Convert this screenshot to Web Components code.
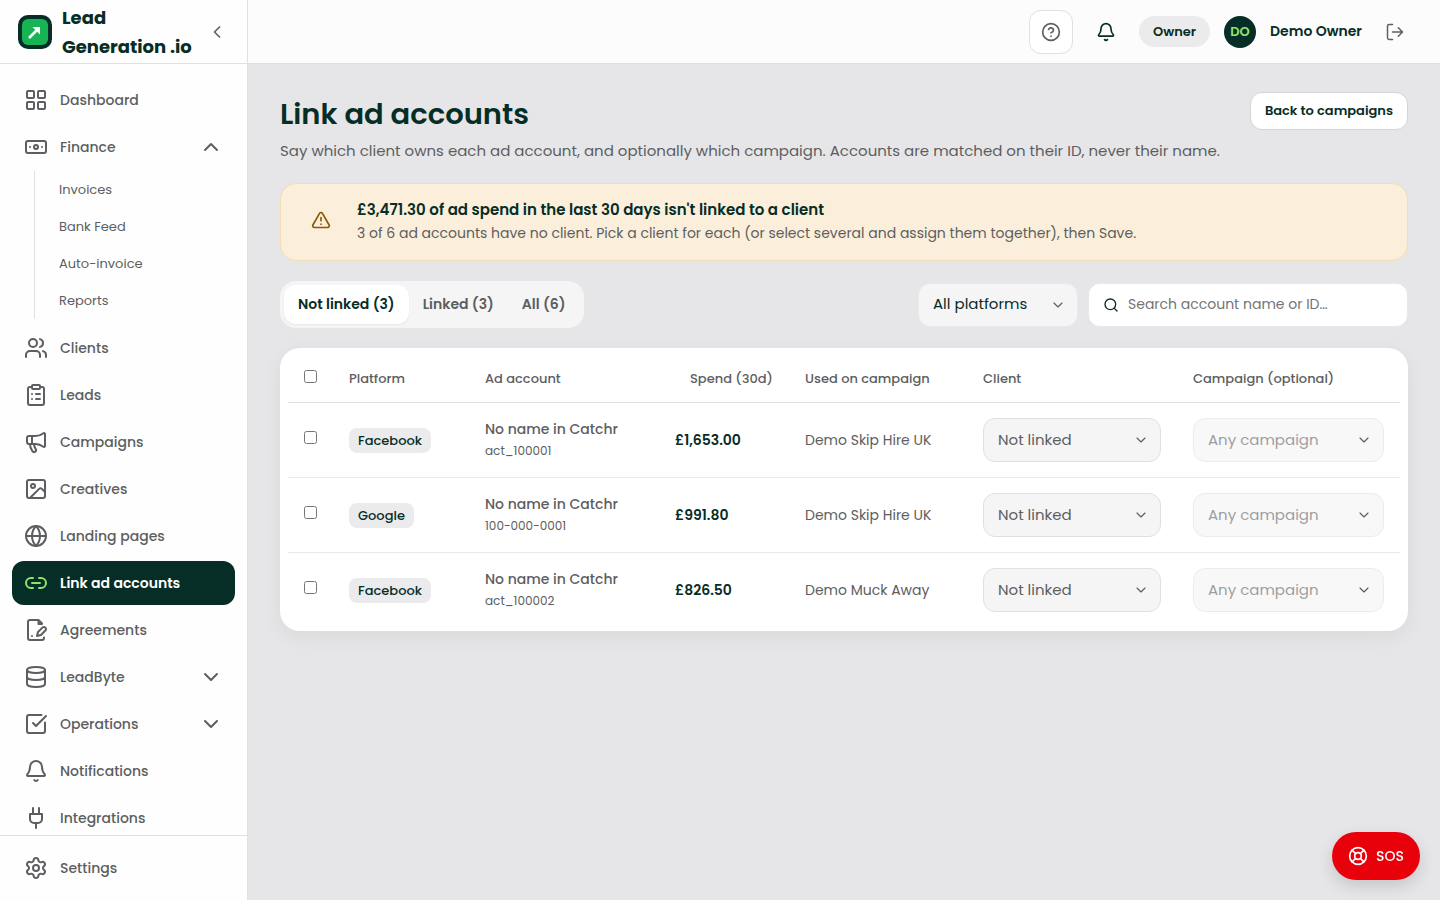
<!DOCTYPE html>
<html lang="en">
<head>
<meta charset="utf-8">
<meta name="viewport" content="width=device-width, initial-scale=1">
<title>Link ad accounts - Lead Generation .io</title>
<style>
    :root {
        --ink: #062d26;
        --muted: #5c5e61;
        --page: #e6e6e8;
        --line: #e0e0e2;
        --soft: #f5f5f6;
        --chip: #ebebed;
        --lime: #8fe36a;
        --sos: #e8000b;
    }

    body {
        margin: 0;
        background: var(--page);
        color: var(--ink);
        font-family: Poppins, Inter, "Liberation Sans", sans-serif;
        font-size: 15px;
    }
</style>
</head>
<body>

<app-shell>
    <app-sidebar slot="sidebar">
        <nav-item icon="grid">Dashboard</nav-item>
        <nav-group icon="banknote" label="Finance" open>
            <a href="#invoices">Invoices</a>
            <a href="#bank-feed">Bank Feed</a>
            <a href="#auto-invoice">Auto-invoice</a>
            <a href="#reports">Reports</a>
        </nav-group>
        <nav-item icon="users">Clients</nav-item>
        <nav-item icon="clipboard">Leads</nav-item>
        <nav-item icon="megaphone">Campaigns</nav-item>
        <nav-item icon="image">Creatives</nav-item>
        <nav-item icon="globe">Landing pages</nav-item>
        <nav-item icon="link" active>Link ad accounts</nav-item>
        <nav-item icon="signature">Agreements</nav-item>
        <nav-group icon="database" label="LeadByte"></nav-group>
        <nav-group icon="check-square" label="Operations"></nav-group>
        <nav-item icon="bell">Notifications</nav-item>
        <nav-item icon="plug">Integrations</nav-item>
        <nav-item slot="footer" icon="settings">Settings</nav-item>
    </app-sidebar>

    <app-topbar slot="topbar" role-name="Owner" initials="DO">Demo Owner</app-topbar>

    <page-heading>
        <span slot="title">Link ad accounts</span>
        <app-button slot="action">Back to campaigns</app-button>
        Say which client owns each ad account, and optionally which campaign. Accounts are matched on their ID, never their name.
    </page-heading>

    <page-alert>
        <span slot="title">£3,471.30 of ad spend in the last 30 days isn't linked to a client</span>
        3 of 6 ad accounts have no client. Pick a client for each (or select several and assign them together), then Save.
    </page-alert>

    <filter-bar></filter-bar>
    <accounts-table></accounts-table>
    <sos-button>SOS</sos-button>
</app-shell>

<script>
const ICONS = {
    'grid': '<rect x="3" y="3" width="7" height="7" rx="1"/><rect x="14" y="3" width="7" height="7" rx="1"/><rect x="14" y="14" width="7" height="7" rx="1"/><rect x="3" y="14" width="7" height="7" rx="1"/>',
    'banknote': '<rect x="2" y="6" width="20" height="12" rx="2"/><circle cx="12" cy="12" r="2"/><path d="M6 12h.01M18 12h.01"/>',
    'users': '<path d="M16 21v-2a4 4 0 0 0-4-4H6a4 4 0 0 0-4 4v2"/><circle cx="9" cy="7" r="4"/><path d="M22 21v-2a4 4 0 0 0-3-3.87M16 3.13a4 4 0 0 1 0 7.75"/>',
    'clipboard': '<rect x="8" y="2" width="8" height="4" rx="1"/><path d="M16 4h2a2 2 0 0 1 2 2v14a2 2 0 0 1-2 2H6a2 2 0 0 1-2-2V6a2 2 0 0 1 2-2h2M12 11h4M12 16h4M8 11h.01M8 16h.01"/>',
    'megaphone': '<path d="M11 6a13 13 0 0 0 8.4-2.8A1 1 0 0 1 21 4v12a1 1 0 0 1-1.6.8A13 13 0 0 0 11 14H5a2 2 0 0 1-2-2V8a2 2 0 0 1 2-2z"/><path d="M6 14a12 12 0 0 0 2.4 7.2 2 2 0 0 0 3.2-2.4A8 8 0 0 1 10 14M8 6v8"/>',
    'image': '<rect x="3" y="3" width="18" height="18" rx="2"/><circle cx="9" cy="9" r="2"/><path d="m21 15-3.086-3.086a2 2 0 0 0-2.828 0L6 21"/>',
    'globe': '<circle cx="12" cy="12" r="10"/><path d="M12 2a14.5 14.5 0 0 0 0 20 14.5 14.5 0 0 0 0-20M2 12h20"/>',
    'link': '<path d="M9 17H7A5 5 0 0 1 7 7h2M15 7h2a5 5 0 1 1 0 10h-2M8 12h8"/>',
    'signature': '<path d="M20 19.5v.5a2 2 0 0 1-2 2H6a2 2 0 0 1-2-2V4a2 2 0 0 1 2-2h8.5L18 5.5M14.5 2v4H18M8 18h.01"/><path d="M18.42 9.61a2.1 2.1 0 1 1 2.97 2.97L16.95 17 13 18l.99-3.95 4.43-4.44Z"/>',
    'database': '<ellipse cx="12" cy="5" rx="9" ry="3"/><path d="M3 5v14a9 3 0 0 0 18 0V5M3 12a9 3 0 0 0 18 0"/>',
    'check-square': '<path d="M21 10.5V19a2 2 0 0 1-2 2H5a2 2 0 0 1-2-2V5a2 2 0 0 1 2-2h12.5"/><path d="m9 11 3 3L22 4"/>',
    'bell': '<path d="M10.268 21a2 2 0 0 0 3.464 0"/><path d="M3.262 15.326A1 1 0 0 0 4 17h16a1 1 0 0 0 .74-1.673C19.41 13.956 18 12.499 18 8A6 6 0 0 0 6 8c0 4.499-1.411 5.956-2.738 7.326"/>',
    'plug': '<path d="M12 22v-5M9 8V2M15 8V2M18 8v5a4 4 0 0 1-4 4h-4a4 4 0 0 1-4-4V8Z"/>',
    'settings': '<path d="M9.671 4.136a2.34 2.34 0 0 1 4.659 0 2.34 2.34 0 0 0 3.319 1.915 2.34 2.34 0 0 1 2.33 4.033 2.34 2.34 0 0 0 0 3.831 2.34 2.34 0 0 1-2.33 4.033 2.34 2.34 0 0 0-3.319 1.915 2.34 2.34 0 0 1-4.659 0 2.34 2.34 0 0 0-3.32-1.915 2.34 2.34 0 0 1-2.33-4.033 2.34 2.34 0 0 0 0-3.831A2.34 2.34 0 0 1 6.35 6.051a2.34 2.34 0 0 0 3.319-1.915"/><circle cx="12" cy="12" r="3"/>',
    'help': '<circle cx="12" cy="12" r="10"/><path d="M9.09 9a3 3 0 0 1 5.83 1c0 2-3 3-3 3M12 17h.01"/>',
    'logout': '<path d="m16 17 5-5-5-5M21 12H9M9 21H5a2 2 0 0 1-2-2V5a2 2 0 0 1 2-2h4"/>',
    'alert': '<path d="m21.73 18-8-14a2 2 0 0 0-3.48 0l-8 14A2 2 0 0 0 4 21h16a2 2 0 0 0 1.73-3M12 9v4M12 17h.01"/>',
    'search': '<circle cx="11" cy="11" r="8"/><path d="m21 21-4.34-4.34"/>',
    'lifebuoy': '<circle cx="12" cy="12" r="10"/><circle cx="12" cy="12" r="4"/><path d="m4.93 4.93 4.24 4.24M14.83 9.17l4.24-4.24M14.83 14.83l4.24 4.24M9.17 14.83l-4.24 4.24"/>',
    'chevron-down': '<path d="m6 9 6 6 6-6"/>',
    'chevron-up': '<path d="m18 15-6-6-6 6"/>',
    'chevron-left': '<path d="m15 18-6-6 6-6"/>'
};

class AppIcon extends HTMLElement {
    connectedCallback() {
        const size = this.getAttribute('size') || 24;
        const weight = this.getAttribute('weight') || 2;
        const root = this.shadowRoot || this.attachShadow({ mode: 'open' });
        root.innerHTML = `
            <style>
                :host { display: block; flex: none; width: ${size}px; height: ${size}px; }
                svg { display: block; }
            </style>
            <svg width="${size}" height="${size}" viewBox="0 0 24 24" fill="none" stroke="currentColor"
                stroke-width="${weight}" stroke-linecap="round" stroke-linejoin="round" aria-hidden="true">
                ${ICONS[this.getAttribute('name')]}
            </svg>
        `;
    }
}

class AppShell extends HTMLElement {
    constructor() {
        super();
        this.attachShadow({ mode: 'open' });
        this.shadowRoot.innerHTML = `
            <style>
                :host { display: grid; grid-template-columns: 248px minmax(0, 1fr); min-height: 100vh; }
                main { display: flex; flex-direction: column; padding: 28px 32px; }
            </style>
            <slot name="sidebar"></slot>
            <div>
                <slot name="topbar"></slot>
                <main><slot></slot></main>
            </div>
        `;
    }
}

class AppSidebar extends HTMLElement {
    constructor() {
        super();
        this.attachShadow({ mode: 'open' });
        this.shadowRoot.innerHTML = `
            <style>
                :host {
                    display: flex;
                    flex-direction: column;
                    position: sticky;
                    top: 0;
                    height: 100vh;
                    box-sizing: border-box;
                    background: #fefefe;
                    border-right: 1px solid var(--line);
                }
                header {
                    display: flex;
                    align-items: center;
                    gap: 10px;
                    height: 63px;
                    padding: 0 18px;
                    border-bottom: 1px solid var(--line);
                }
                .logo { flex: none; display: block; }
                .brand {
                    flex: 1;
                    min-width: 0;
                    font-size: 18px;
                    line-height: 29px;
                    font-weight: 700;
                    white-space: nowrap;
                }
                button {
                    display: grid;
                    place-items: center;
                    width: 24px;
                    height: 24px;
                    padding: 0;
                    border: 0;
                    background: none;
                    color: var(--muted);
                }
                nav {
                    flex: 1;
                    min-height: 0;
                    overflow: hidden;
                    display: flex;
                    flex-direction: column;
                    gap: 3px;
                    padding: 14px 12px 0;
                }
                footer { padding: 10px 12px; border-top: 1px solid var(--line); }
            </style>
            <header>
                <svg class="logo" width="34" height="34" viewBox="0 0 34 34" aria-hidden="true">
                    <rect width="34" height="34" rx="10" fill="#062d26"/>
                    <rect x="4" y="4" width="26" height="26" rx="6" fill="#16b455"/>
                    <path d="M11 23 20 14" fill="none" stroke="#fff" stroke-width="2.6"/>
                    <path d="M14.5 12H22v7.5Z" fill="#fff"/>
                </svg>
                <div class="brand">Lead<br>Generation .io</div>
                <button aria-label="Collapse sidebar"><app-icon name="chevron-left" size="20"></app-icon></button>
            </header>
            <nav><slot></slot></nav>
            <footer><slot name="footer"></slot></footer>
        `;
    }
}

class NavItem extends HTMLElement {
    constructor() {
        super();
        this.attachShadow({ mode: 'open' });
        this.shadowRoot.innerHTML = `
            <style>
                :host { display: block; flex: none; }
                a {
                    display: flex;
                    align-items: center;
                    gap: 12px;
                    height: 44px;
                    padding: 0 12px;
                    border-radius: 12px;
                    color: var(--muted);
                    font-size: 14px;
                    font-weight: 500;
                    text-decoration: none;
                }
                :host([active]) a { background: var(--ink); color: #fff; font-weight: 600; }
                :host([active]) app-icon { color: var(--lime); }
            </style>
            <a href="#"><app-icon name="${this.getAttribute('icon')}"></app-icon><slot></slot></a>
        `;
    }
}

class NavGroup extends HTMLElement {
    constructor() {
        super();
        const open = this.hasAttribute('open');
        this.attachShadow({ mode: 'open' });
        this.shadowRoot.innerHTML = `
            <style>
                :host { display: block; flex: none; }
                button {
                    display: flex;
                    align-items: center;
                    gap: 12px;
                    width: 100%;
                    height: 44px;
                    padding: 0 12px;
                    border: 0;
                    background: none;
                    color: var(--muted);
                    font: inherit;
                    font-size: 14px;
                    font-weight: 500;
                    text-align: left;
                }
                span { flex: 1; }
                .sub {
                    display: flex;
                    flex-direction: column;
                    margin: 2px 0 4px 22px;
                    border-left: 1px solid var(--line);
                }
                .sub[hidden] { display: none; }
                ::slotted(a) {
                    padding-left: 24px;
                    color: var(--muted);
                    font-size: 13px;
                    line-height: 37px;
                    text-decoration: none;
                }
            </style>
            <button aria-expanded="${open}">
                <app-icon name="${this.getAttribute('icon')}"></app-icon>
                <span>${this.getAttribute('label')}</span>
                <app-icon name="chevron-${open ? 'up' : 'down'}"></app-icon>
            </button>
            <div class="sub" ${open ? '' : 'hidden'}><slot></slot></div>
        `;
    }
}

class AppTopbar extends HTMLElement {
    constructor() {
        super();
        this.attachShadow({ mode: 'open' });
        this.shadowRoot.innerHTML = `
            <style>
                :host {
                    display: flex;
                    align-items: center;
                    justify-content: flex-end;
                    gap: 14px;
                    height: 63px;
                    padding: 0 26px;
                    background: #fcfcfc;
                    border-bottom: 1px solid var(--line);
                }
                button {
                    display: grid;
                    place-items: center;
                    width: 38px;
                    height: 38px;
                    padding: 0;
                    border: 0;
                    background: none;
                    color: var(--muted);
                }
                .help {
                    width: 44px;
                    height: 44px;
                    border: 1px solid var(--line);
                    border-radius: 12px;
                    background: #fff;
                }
                .bell { color: var(--ink); }
                .role {
                    padding: 0 14px;
                    border-radius: 16px;
                    background: var(--chip);
                    font-size: 13px;
                    line-height: 31px;
                    font-weight: 600;
                }
                .avatar {
                    width: 32px;
                    border-radius: 50%;
                    background: var(--ink);
                    color: var(--lime);
                    font-size: 13px;
                    line-height: 32px;
                    font-weight: 600;
                    text-align: center;
                }
                .name { font-size: 14px; font-weight: 600; }
            </style>
            <button class="help" aria-label="Help"><app-icon name="help" size="20"></app-icon></button>
            <button class="bell" aria-label="Notifications"><app-icon name="bell" size="20"></app-icon></button>
            <span class="role">${this.getAttribute('role-name')}</span>
            <span class="avatar">${this.getAttribute('initials')}</span>
            <span class="name"><slot></slot></span>
            <button aria-label="Log out"><app-icon name="logout" size="20" weight="1.75"></app-icon></button>
        `;
    }
}

class AppButton extends HTMLElement {
    constructor() {
        super();
        this.attachShadow({ mode: 'open' });
        this.shadowRoot.innerHTML = `
            <style>
                :host { display: block; }
                button {
                    height: 38px;
                    padding: 0 14px;
                    border: 1px solid #d3d4d7;
                    border-radius: 12px;
                    background: #fff;
                    color: var(--ink);
                    font: inherit;
                    font-size: 13px;
                    font-weight: 600;
                    white-space: nowrap;
                }
            </style>
            <button><slot></slot></button>
        `;
    }
}

class PageHeading extends HTMLElement {
    constructor() {
        super();
        this.attachShadow({ mode: 'open' });
        this.shadowRoot.innerHTML = `
            <style>
                :host { display: flex; align-items: flex-start; gap: 16px; margin-bottom: 20px; }
                div { flex: 1; }
                h1 { margin: 0; font-size: 29px; line-height: 45px; font-weight: 600; }
                p { margin: 2px 0 0; color: var(--muted); line-height: 24px; }
            </style>
            <div>
                <h1><slot name="title"></slot></h1>
                <p><slot></slot></p>
            </div>
            <slot name="action"></slot>
        `;
    }
}

class PageAlert extends HTMLElement {
    constructor() {
        super();
        this.attachShadow({ mode: 'open' });
        this.shadowRoot.innerHTML = `
            <style>
                :host {
                    display: flex;
                    align-items: flex-start;
                    gap: 16px;
                    margin-bottom: 20px;
                    padding: 14px 20px 16px;
                    border: 1px solid #f0ddb2;
                    border-radius: 16px;
                    background: #fbefdb;
                }
                .icon { display: grid; place-items: center; width: 40px; height: 44px; color: #8a5a00; }
                strong, p { display: block; margin: 0; }
                strong { line-height: 24px; font-weight: 600; }
                p { color: var(--muted); font-size: 14px; line-height: 22px; }
            </style>
            <div class="icon"><app-icon name="alert" size="20"></app-icon></div>
            <div>
                <strong><slot name="title"></slot></strong>
                <p><slot></slot></p>
            </div>
        `;
    }
}

class SelectBox extends HTMLElement {
    constructor() {
        super();
        this.attachShadow({ mode: 'open' });
        this.shadowRoot.innerHTML = `
            <style>
                :host { display: grid; align-items: center; color: var(--muted); }
                :host([disabled]) select { opacity: 0.6; }
                :host([tone="ink"]) select { color: var(--ink); border-color: #e9e9eb; }
                select, app-icon { grid-area: 1 / 1; }
                select {
                    appearance: none;
                    width: 100%;
                    height: 44px;
                    padding: 0 36px 2px 14px;
                    border: 1px solid #dfe0e2;
                    border-radius: 12px;
                    background: var(--soft);
                    color: inherit;
                    font: inherit;
                }
                app-icon { z-index: 1; justify-self: end; margin-right: 12px; pointer-events: none; }
            </style>
            <select aria-label="${this.getAttribute('label')}" ${this.hasAttribute('disabled') ? 'disabled' : ''}>
                <option>${this.getAttribute('value')}</option>
            </select>
            <app-icon name="chevron-down" size="16" weight="1.75"></app-icon>
        `;
    }
}

class FilterBar extends HTMLElement {
    constructor() {
        super();
        this.attachShadow({ mode: 'open' });
        this.shadowRoot.innerHTML = `
            <style>
                :host { display: flex; align-items: center; gap: 10px; margin-bottom: 20px; }
                .tabs {
                    display: flex;
                    margin-right: auto;
                    padding: 4px;
                    border-radius: 16px;
                    background: var(--soft);
                }
                button {
                    height: 39px;
                    padding: 0 14px;
                    border: 0;
                    border-radius: 12px;
                    background: none;
                    color: var(--muted);
                    font: inherit;
                    font-size: 14px;
                    font-weight: 600;
                }
                button[aria-selected="true"] {
                    background: #fff;
                    color: var(--ink);
                    box-shadow: 0 1px 2px rgba(0, 0, 0, 0.06);
                }
                select-box { width: 160px; }
                .search {
                    display: flex;
                    align-items: center;
                    gap: 9px;
                    box-sizing: border-box;
                    width: 320px;
                    height: 44px;
                    padding: 0 14px;
                    border: 1px solid #e9e9eb;
                    border-radius: 12px;
                    background: #fff;
                }
                input {
                    flex: 1;
                    min-width: 0;
                    padding: 0;
                    border: 0;
                    outline: 0;
                    background: none;
                    color: var(--ink);
                    font: inherit;
                    font-size: 14px;
                }
                input::placeholder { color: #757575; }
            </style>
            <div class="tabs" role="tablist">
                <button role="tab" aria-selected="true">Not linked (3)</button>
                <button role="tab" aria-selected="false">Linked (3)</button>
                <button role="tab" aria-selected="false">All (6)</button>
            </div>
            <select-box label="Platform" value="All platforms" tone="ink"></select-box>
            <label class="search">
                <app-icon name="search" size="16"></app-icon>
                <input type="search" aria-label="Search accounts" placeholder="Search account name or ID…">
            </label>
        `;
    }
}

const ACCOUNTS = [
    { platform: 'Facebook', id: 'act_100001', spend: '£1,653.00', campaign: 'Demo Skip Hire UK' },
    { platform: 'Google', id: '100-000-0001', spend: '£991.80', campaign: 'Demo Skip Hire UK' },
    { platform: 'Facebook', id: 'act_100002', spend: '£826.50', campaign: 'Demo Muck Away' }
];

class AccountsTable extends HTMLElement {
    constructor() {
        super();
        this.attachShadow({ mode: 'open' });
        this.shadowRoot.innerHTML = `
            <style>
                :host {
                    display: block;
                    padding: 4px 8px;
                    border-radius: 20px;
                    background: #fff;
                    box-shadow: 0 6px 20px rgba(20, 30, 40, 0.06);
                }
                table { width: 100%; table-layout: fixed; border-collapse: separate; border-spacing: 0; }
                th {
                    box-sizing: border-box;
                    height: 51px;
                    padding: 3px 16px 0;
                    border-bottom: 1px solid var(--line);
                    color: var(--muted);
                    font-size: 13px;
                    font-weight: 500;
                    text-align: left;
                    white-space: nowrap;
                }
                td {
                    padding: 15px 16px;
                    border-bottom: 1px solid #e9e9eb;
                    color: var(--muted);
                    font-size: 14px;
                    white-space: nowrap;
                }
                tr:last-child td { border-bottom: 0; }
                input { display: block; width: 13px; height: 13px; margin: 0 0 5px; }
                .right { text-align: right; }
                .chip {
                    display: inline-block;
                    padding: 0 9px;
                    border-radius: 8px;
                    background: var(--chip);
                    color: var(--ink);
                    font-size: 13px;
                    line-height: 25px;
                    font-weight: 500;
                }
                .account { line-height: 22px; font-weight: 500; }
                .id { font-size: 12px; line-height: 22px; }
                .spend { color: var(--ink); font-weight: 600; }
                select-box { font-size: 15px; }
                .check { width: 45px; }
                .platform { width: 136px; }
                .ad { width: 190px; }
                .money { width: 130px; }
                .used { width: 178px; }
                .client { width: 210px; }
                .campaign { width: 223px; }
            </style>
            <table>
                <thead>
                    <tr>
                        <th class="check"><input type="checkbox" aria-label="Select all"></th>
                        <th class="platform">Platform</th>
                        <th class="ad">Ad account</th>
                        <th class="money right">Spend (30d)</th>
                        <th class="used">Used on campaign</th>
                        <th class="client">Client</th>
                        <th class="campaign">Campaign (optional)</th>
                    </tr>
                </thead>
                <tbody>${ACCOUNTS.map((account) => this.row(account)).join('')}</tbody>
            </table>
        `;
    }

    row(account) {
        return `
            <tr>
                <td><input type="checkbox" aria-label="Select ${account.id}"></td>
                <td><span class="chip">${account.platform}</span></td>
                <td>
                    <div class="account">No name in Catchr</div>
                    <div class="id">${account.id}</div>
                </td>
                <td class="spend">${account.spend}</td>
                <td>${account.campaign}</td>
                <td><select-box label="Client for ${account.id}" value="Not linked"></select-box></td>
                <td><select-box label="Campaign for ${account.id}" value="Any campaign" disabled></select-box></td>
            </tr>
        `;
    }
}

class SosButton extends HTMLElement {
    constructor() {
        super();
        this.attachShadow({ mode: 'open' });
        this.shadowRoot.innerHTML = `
            <style>
                :host { display: block; position: fixed; right: 20px; bottom: 20px; }
                button {
                    display: flex;
                    align-items: center;
                    gap: 8px;
                    height: 48px;
                    padding: 0 16px;
                    border: 0;
                    border-radius: 24px;
                    background: var(--sos);
                    color: #fff;
                    font: inherit;
                    font-size: 14px;
                    font-weight: 500;
                    box-shadow: 0 6px 16px rgba(0, 0, 0, 0.14);
                }
            </style>
            <button><app-icon name="lifebuoy" size="20"></app-icon><slot></slot></button>
        `;
    }
}

customElements.define('app-icon', AppIcon);
customElements.define('app-shell', AppShell);
customElements.define('app-sidebar', AppSidebar);
customElements.define('nav-item', NavItem);
customElements.define('nav-group', NavGroup);
customElements.define('app-topbar', AppTopbar);
customElements.define('app-button', AppButton);
customElements.define('page-heading', PageHeading);
customElements.define('page-alert', PageAlert);
customElements.define('select-box', SelectBox);
customElements.define('filter-bar', FilterBar);
customElements.define('accounts-table', AccountsTable);
customElements.define('sos-button', SosButton);
</script>
</body>
</html>
